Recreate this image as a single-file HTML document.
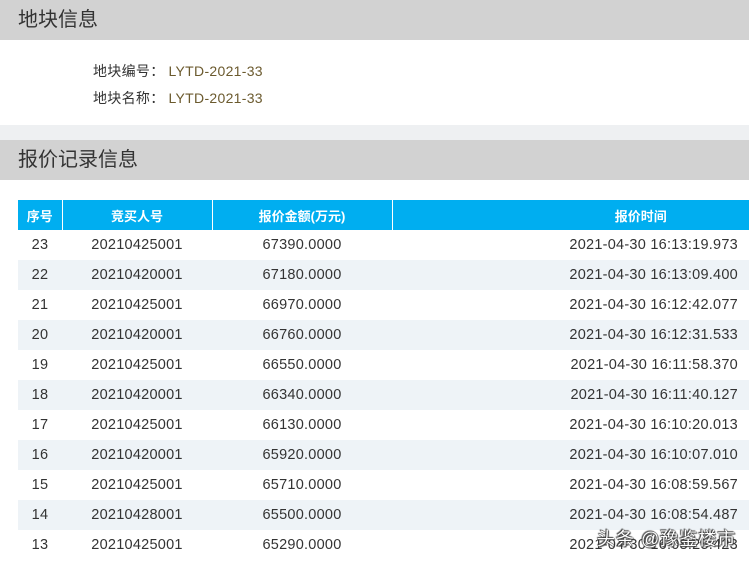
<!DOCTYPE html>
<html><head><meta charset="utf-8"><style>
*{margin:0;padding:0;box-sizing:border-box}
body{width:749px;height:561px;overflow:hidden;background:#fff;font-family:"Liberation Sans","Noto Sans CJK SC",sans-serif;color:#333;position:relative}
.bar{position:absolute;left:0;width:749px;height:40px;background:#d2d2d2;font-size:20px;color:#333;padding-left:18px;line-height:40px}
.band{position:absolute;left:0;top:125px;width:749px;height:15px;background:#eef0f2}
.info{position:absolute;left:93px;font-size:14px;color:#333;letter-spacing:0.3px}
.info span{color:#6b5a2e;margin-left:4px}
table{position:absolute;left:18px;top:200px;width:731px;border-collapse:collapse;font-size:14.5px;letter-spacing:0.25px}
th{background:#00aef0;color:#fff;height:30px;font-size:13px;font-weight:bold;border-right:1px solid #fff;letter-spacing:0}
td{height:30px;text-align:center;color:#333}
tr:nth-child(odd) td{background:#eef3f7}
td.t{text-align:right;padding-right:11px}
th.t{text-align:center;padding-left:140px;padding-right:0;border-right:none}
.wm{position:absolute;left:597px;top:525px;font-size:18px;color:#fff;text-shadow:0 0 1px #222,0 0 1px #222,1px 1px 1px #444,-1px -1px 1px #444;letter-spacing:1px}
</style></head><body>
<div class="bar" style="top:0">地块信息</div>
<div class="info" style="top:61px">地块编号：<span>LYTD-2021-33</span></div>
<div class="info" style="top:88px">地块名称：<span>LYTD-2021-33</span></div>
<div class="band"></div>
<div class="bar" style="top:140px">报价记录信息</div>
<table>
<tr><th style="width:44px">序号</th><th style="width:150px">竞买人号</th><th style="width:180px">报价金额(万元)</th><th class="t">报价时间</th></tr>
<tr><td>23</td><td>20210425001</td><td>67390.0000</td><td class="t">2021-04-30 16:13:19.973</td></tr>
<tr><td>22</td><td>20210420001</td><td>67180.0000</td><td class="t">2021-04-30 16:13:09.400</td></tr>
<tr><td>21</td><td>20210425001</td><td>66970.0000</td><td class="t">2021-04-30 16:12:42.077</td></tr>
<tr><td>20</td><td>20210420001</td><td>66760.0000</td><td class="t">2021-04-30 16:12:31.533</td></tr>
<tr><td>19</td><td>20210425001</td><td>66550.0000</td><td class="t">2021-04-30 16:11:58.370</td></tr>
<tr><td>18</td><td>20210420001</td><td>66340.0000</td><td class="t">2021-04-30 16:11:40.127</td></tr>
<tr><td>17</td><td>20210425001</td><td>66130.0000</td><td class="t">2021-04-30 16:10:20.013</td></tr>
<tr><td>16</td><td>20210420001</td><td>65920.0000</td><td class="t">2021-04-30 16:10:07.010</td></tr>
<tr><td>15</td><td>20210425001</td><td>65710.0000</td><td class="t">2021-04-30 16:08:59.567</td></tr>
<tr><td>14</td><td>20210428001</td><td>65500.0000</td><td class="t">2021-04-30 16:08:54.487</td></tr>
<tr><td>13</td><td>20210425001</td><td>65290.0000</td><td class="t">2021-04-30 16:08:25.423</td></tr>
</table>
<div class="wm">头条 @豫鉴楼市</div>
</body></html>
